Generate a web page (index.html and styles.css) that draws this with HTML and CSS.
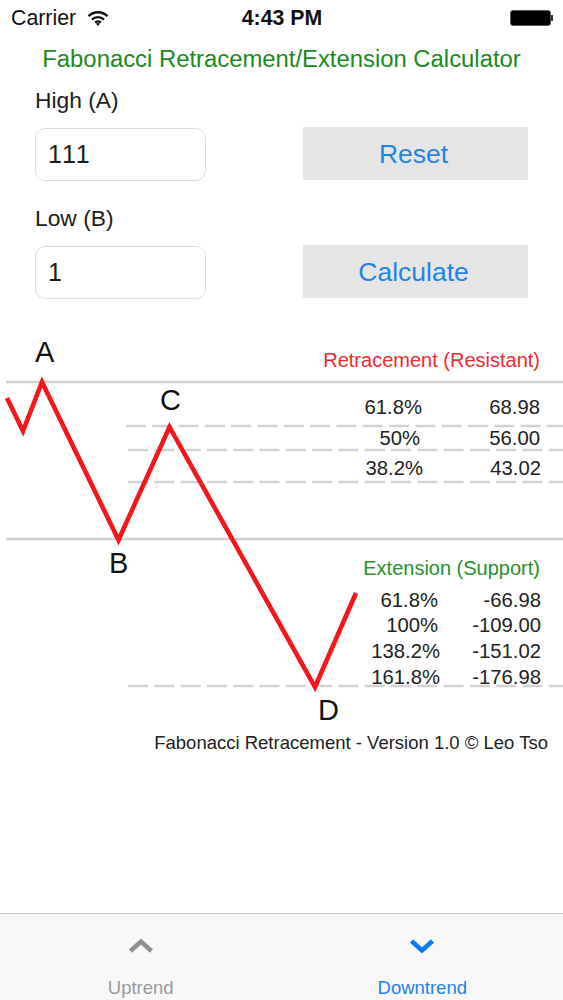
FILE: index.html
```html
<!DOCTYPE html>
<html lang="en">
<head>
<meta charset="utf-8">
<title>Fabonacci Calculator</title>
<link rel="stylesheet" href="styles.css">
</head>
<body>
<div class="app">
  <header class="status">
    <div class="status-left">
      <span>Carrier</span>
      <svg class="wifi" viewBox="0 0 22 16" width="22" height="16"><path d="M1.5 6.2a13.5 13.5 0 0 1 19 0" /><path d="M5 9.6a8.6 8.6 0 0 1 12 0"/><path d="M8.2 12.6a4 4 0 0 1 5.6 0"/><path class="wifi-dot" d="M11 16l-2-2.2a3 3 0 0 1 4 0z"/></svg>
    </div>
    <div class="status-time">4:43 PM</div>
    <div class="status-right">
      <span class="battery"></span><span class="battery-tip"></span>
    </div>
  </header>
  <h1 class="title">Fabonacci Retracement/Extension Calculator</h1>
  <section class="form">
    <div class="field-label">High (A)</div>
    <div class="form-row">
      <div class="input">111</div>
      <div class="button">Reset</div>
    </div>
    <div class="field-label second">Low (B)</div>
    <div class="form-row">
      <div class="input">1</div>
      <div class="button">Calculate</div>
    </div>
  </section>
  <section class="chart">
    <svg class="chart-svg" viewBox="0 0 563 440" width="563" height="440">
      <g class="solid">
        <line x1="6" y1="52" x2="563" y2="52"/>
        <line x1="6" y1="209" x2="563" y2="209"/>
      </g>
      <g class="dashed">
        <line x1="126" y1="96" x2="563" y2="96"/>
        <line x1="128" y1="120" x2="563" y2="120"/>
        <line x1="128" y1="152" x2="563" y2="152"/>
        <line x1="128" y1="356" x2="563" y2="356"/>
      </g>
      <polyline class="trend" points="7,68 23,101 42,52 118.500,210 169.500,97 315,357 356,263"/>
    </svg>
    <span class="pt pt-a">A</span>
    <span class="pt pt-b">B</span>
    <span class="pt pt-c">C</span>
    <span class="pt pt-d">D</span>
    <div class="heading red">Retracement (Resistant)</div>
    <div class="vals r1"><span>61.8%</span><span>68.98</span></div>
    <div class="vals r2"><span>50%</span><span>56.00</span></div>
    <div class="vals r3"><span>38.2%</span><span>43.02</span></div>
    <div class="heading green">Extension (Support)</div>
    <div class="vals e1"><span>61.8%</span><span>-66.98</span></div>
    <div class="vals e2"><span>100%</span><span>-109.00</span></div>
    <div class="vals e3"><span>138.2%</span><span>-151.02</span></div>
    <div class="vals e4"><span>161.8%</span><span>-176.98</span></div>
    <div class="version">Fabonacci Retracement - Version 1.0 © Leo Tso</div>
  </section>
  <nav class="tabs">
    <div class="tab">
      <svg class="chev" viewBox="0 0 26 16" width="26" height="16"><polyline points="2.500,13 13,3.500 23.500,13"/></svg>
      <span>Uptrend</span>
    </div>
    <div class="tab active">
      <svg class="chev" viewBox="0 0 26 16" width="26" height="16"><polyline points="2.500,3 13,12.500 23.500,3"/></svg>
      <span>Downtrend</span>
    </div>
  </nav>
</div>
</body>
</html>
```
FILE: styles.css
```css
* { box-sizing: border-box; }
html, body { margin: 0; padding: 0; background: #fff; }
body { font-family: "Liberation Sans", Arial, sans-serif; color: #1c1c1c; }
.app { width: 563px; height: 1000px; display: flex; flex-direction: column; overflow: hidden; }

.status { height: 36px; margin-bottom: 2px; flex: none; display: grid; grid-template-columns: 1fr auto 1fr; align-items: center; padding: 0 10px 0 11px; font-size: 21.300px; color: #111; }
.status-left { display: flex; align-items: center; gap: 11px; }
.wifi { fill: none; stroke: #111; stroke-width: 2.4; }
.wifi-dot { fill: #111; stroke: none; }
.status-time { font-weight: bold; }
.status-right { display: flex; justify-content: flex-end; align-items: center; }
.battery { width: 41px; height: 16px; background: #000; border: 1px solid #555; border-radius: 3px; }
.battery-tip { width: 2px; height: 6px; background: #333; }

.title { margin: 6px 0 0; height: 30px; font-size: 23.850px; font-weight: normal; line-height: 29px; color: #1a8a1e; text-align: center; }

.form { padding: 0 35px; flex: none; }
.field-label { font-size: 22.800px; line-height: 26px; margin-top: 13px; height: 26px; color: #1c1c1c; }
.field-label.second { margin-top: 24px; }
.form-row { display: flex; justify-content: space-between; align-items: flex-start; margin-top: 15px; }
.input { width: 171px; height: 53px; border: 1px solid #dcdcdc; border-radius: 10px; font-size: 25px; font-kerning: none; line-height: 51px; padding-left: 12px; background: #fff; }
.button { width: 225px; height: 53px; margin-top: -1px; padding: 1px 4px 0 0; background: #e5e5e5; color: #1f84e6; font-size: 26.500px; line-height: 53px; text-align: center; }

.chart { position: relative; height: 583px; flex: none; margin-top: 31px; }
.chart-svg { position: absolute; left: 0; top: 0; }
.solid line { stroke: #d0d0d0; stroke-width: 2.5; }
.dashed line { stroke: #d2d2d2; stroke-width: 2.5; stroke-dasharray: 20 6.300; }
.trend { fill: none; stroke: #f7151c; stroke-width: 4.600; stroke-linejoin: miter; filter: blur(0.4px); }
.pt { position: absolute; font-size: 29px; line-height: 32px; color: #111; }
.pt-a { left: 35px; top: 6px; }
.pt-b { left: 109px; top: 217px; }
.pt-c { left: 160px; top: 54px; }
.pt-d { left: 318px; top: 364px; }
.heading { position: absolute; right: 23px; font-size: 20px; line-height: 24px; }
.heading.red { top: 18px; color: #ef2b30; }
.heading.green { top: 226px; color: #2a8f2e; }
.vals { position: absolute; left: 0; width: 563px; height: 24px; font-size: 20.300px; line-height: 24px; font-kerning: none; color: #222; }
.vals span { position: absolute; white-space: nowrap; }
.vals span:first-child { right: 141px; }
.vals span:last-child { right: 22px; }
.r1 { top: 65px; }
.r2 { top: 96px; }
.r3 { top: 126px; }
.r1 span:last-child, .r2 span:last-child { right: 23px; }
.r2 span:first-child { right: 143px; }
.r3 span:first-child { right: 140px; }
.e1 { top: 258px; }
.e2 { top: 283px; }
.e3 { top: 309px; }
.e4 { top: 335px; }
.e1 span:first-child, .e2 span:first-child { right: 125px; }
.e3 span:first-child, .e4 span:first-child { right: 123px; }
.version { position: absolute; right: 15px; top: 401px; font-size: 18.500px; line-height: 24px; color: #222; white-space: nowrap; }

.tabs { flex: 1; display: grid; grid-template-columns: 1fr 1fr; background: #f8f8f8; border-top: 1px solid #c4c4c4; }
.tab { display: flex; flex-direction: column; align-items: center; padding-top: 24px; font-size: 18.500px; color: #9a9a9a; }
.tab span { margin-top: 24px; line-height: 20px; }
.chev { fill: none; stroke: #909090; stroke-width: 4.500; }
.tab.active { color: #1f84e6; }
.tab.active .chev { stroke: #0a7cf5; }
```
